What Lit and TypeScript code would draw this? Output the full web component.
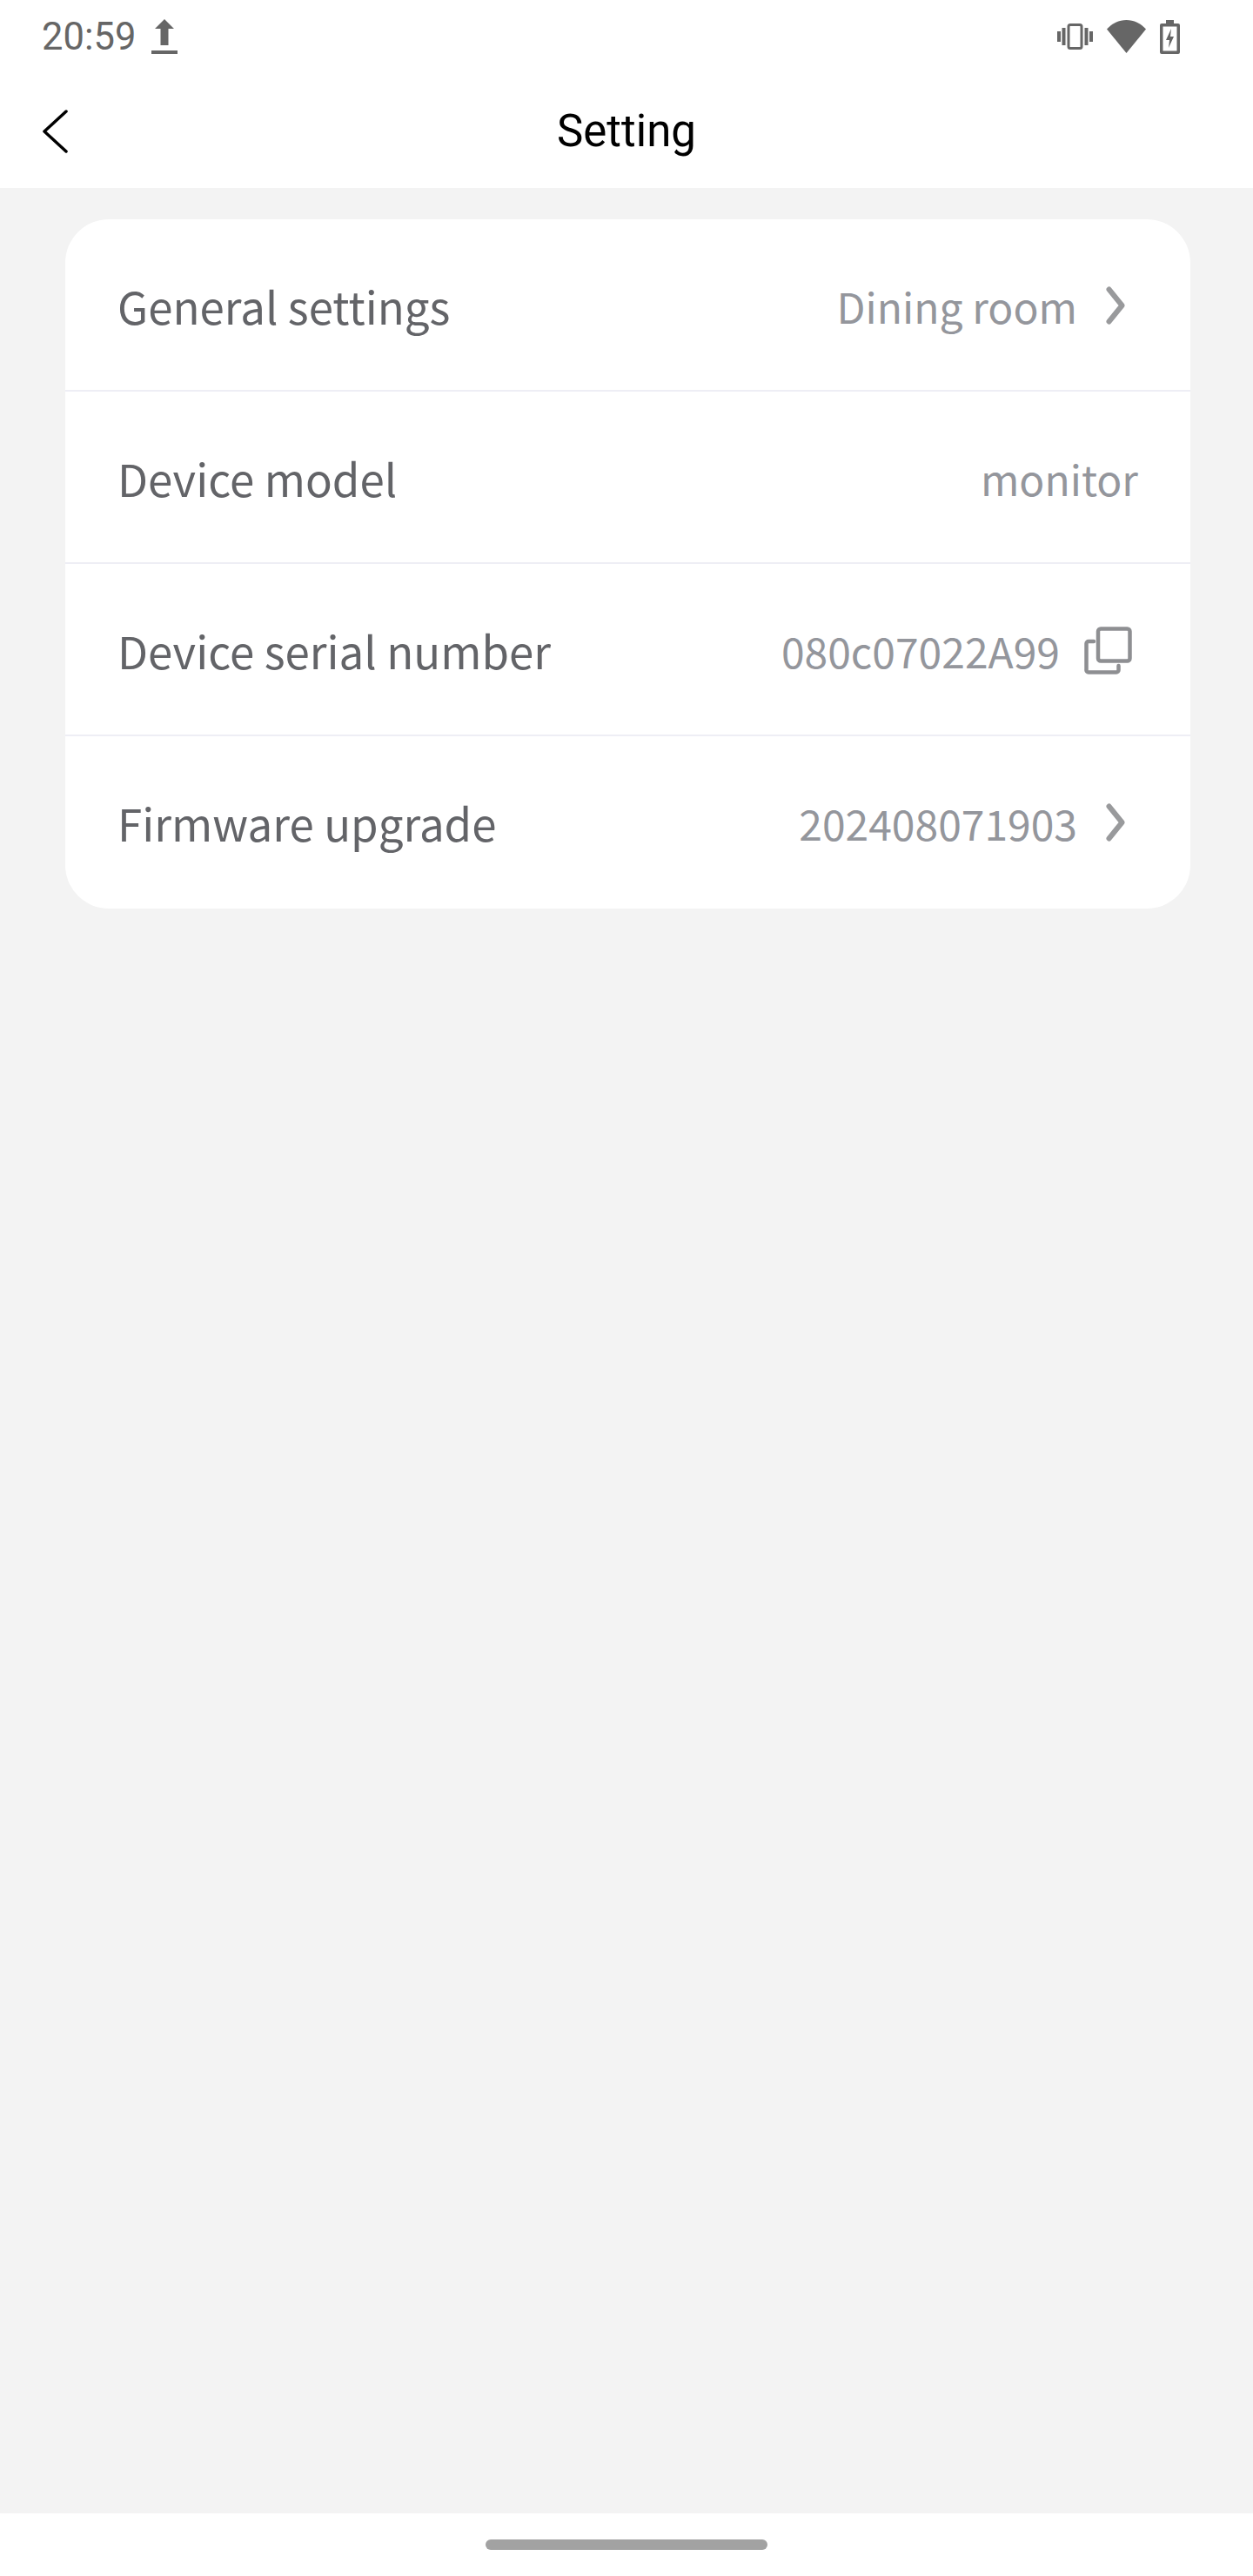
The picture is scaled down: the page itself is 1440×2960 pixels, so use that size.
import { LitElement, html, css, svg } from "lit";
import { customElement } from "lit/decorators.js";

type Row = { label: string; value: string; icon?: "chevron" | "copy" };

const ROWS: Row[] = [
  { label: "General settings", value: "Dining room", icon: "chevron" },
  { label: "Device model", value: "monitor" },
  { label: "Device serial number", value: "080c07022A99", icon: "copy" },
  { label: "Firmware upgrade", value: "202408071903", icon: "chevron" },
];

const chevron = svg`<svg class="chevron" width="22" height="44" viewBox="0 0 22 44"><path d="M3.500 3.500L18.500 22L3.500 40.500" fill="none" stroke="#999a9c" stroke-width="6" stroke-linecap="round" stroke-linejoin="round"/></svg>`;

const copy = svg`<svg class="copy" width="55" height="55" viewBox="0 0 55 55" fill="none" stroke="#8e8f92" stroke-width="4.500" stroke-linejoin="round" stroke-linecap="round"><rect x="16" y="2.500" width="36.500" height="37" rx="3"/><path d="M11 17H5a2.500 2.500 0 0 0-2.500 2.500v30A2.500 2.500 0 0 0 5 52.500h32a2.500 2.500 0 0 0 2.500-2.500v-5"/></svg>`;

@customElement("app-root")
export class AppRoot extends LitElement {
  static styles = css`
    :host {
      display: block;
    }
    .page {
      display: flex;
      flex-direction: column;
      width: 1440px;
      height: 2960px;
      background: #f3f3f3;
    }
    .top {
      height: 216px;
      background: #fff;
      display: flex;
      flex-direction: column;
    }
    .status {
      height: 84px;
      padding: 0 84px 0 48px;
      display: flex;
      align-items: center;
      color: #666;
      font: 43.5px Roboto, sans-serif;
    }
    .status .time {
      margin-right: 18px;
    }
    .status .spacer {
      flex: 1;
    }
    .status svg {
      display: block;
      fill: #666;
    }
    .status .tray {
      display: flex;
      align-items: center;
      gap: 16px;
    }
    .bar {
      flex: 1;
      position: relative;
      display: flex;
      align-items: center;
      justify-content: center;
    }
    .title {
      font: 51px Roboto, sans-serif;
      color: #000;
    }
    .back {
      position: absolute;
      left: 49px;
      top: 42px;
    }
    .content {
      flex: 1;
      padding: 36px 72px 0 75px;
    }
    .card {
      background: #fff;
      border-radius: 50px;
      overflow: hidden;
      padding-bottom: 2px;
    }
    .row {
      box-sizing: border-box;
      height: 196px;
      padding: 2px 60px 0;
      display: flex;
      align-items: center;
      justify-content: space-between;
      font-family: "Noto Sans CJK SC", "Noto Sans", sans-serif;
    }
    .row + .row {
      height: 198px;
      border-top: 2px solid #eeeef5;
    }
    .label {
      color: #636468;
      font-size: 51px;
    }
    .value {
      color: #94969c;
      font-size: 48px;
      display: flex;
      align-items: center;
    }
    .chevron {
      margin-left: 33px;
      margin-right: 15px;
    }
    .copy {
      margin-left: 28px;
      margin-right: 7px;
    }
    .nav {
      height: 72px;
      background: #fff;
      display: flex;
      justify-content: center;
      padding-top: 30px;
      box-sizing: border-box;
    }
    .pill {
      width: 324px;
      height: 12px;
      border-radius: 6px;
      background: #a2a2a2;
    }
  `;

  private renderRow(row: Row) {
    return html`<div class="row">
      <span class="label">${row.label}</span>
      <span class="value">
        ${row.value}
        ${row.icon === "chevron" ? chevron : row.icon === "copy" ? copy : ""}
      </span>
    </div>`;
  }

  render() {
    return html`<div class="page">
      <header class="top">
        <div class="status">
          <span class="time">20:59</span>
          <svg width="30" height="40" viewBox="0 0 30 40">
            <path d="M15 0L26 11H19.500V30H10.500V11H4Z" />
            <rect y="36" width="30" height="4" />
          </svg>
          <span class="spacer"></span>
          <div class="tray">
            <svg width="41" height="30" viewBox="0 0 41 30">
              <rect x="0" y="9" width="4" height="12" />
              <rect x="5.500" y="5" width="4" height="20" />
              <rect x="31.500" y="5" width="4" height="20" />
              <rect x="37" y="9" width="4" height="12" />
              <rect x="13" y="1.500" width="15" height="27" rx="2" fill="none" stroke="#666" stroke-width="3" />
            </svg>
            <svg width="45" height="38" viewBox="0 0 45 38">
              <path d="M22.500 38L0 10.500C6 4 14 0 22.500 0S39 4 45 10.500Z" />
            </svg>
            <svg width="23" height="39" viewBox="0 0 23 39">
              <path fill-rule="evenodd" d="M7 0h9v4h5a2 2 0 0 1 2 2v31a2 2 0 0 1-2 2H2a2 2 0 0 1-2-2V6a2 2 0 0 1 2-2h5ZM3.500 7.500v28h16v-28Z" />
              <path d="M13 10L7 23h4l-1 9 6-13h-4Z" />
            </svg>
          </div>
        </div>
        <div class="bar">
          <svg class="back" width="29" height="50" viewBox="0 0 29 50">
            <path d="M27 2L2 25l25 23" fill="none" stroke="#000" stroke-width="3.500" stroke-linecap="round" stroke-linejoin="round" />
          </svg>
          <span class="title">Setting</span>
        </div>
      </header>
      <main class="content">
        <section class="card">${ROWS.map((r) => this.renderRow(r))}</section>
      </main>
      <footer class="nav"><div class="pill"></div></footer>
    </div>`;
  }
}
